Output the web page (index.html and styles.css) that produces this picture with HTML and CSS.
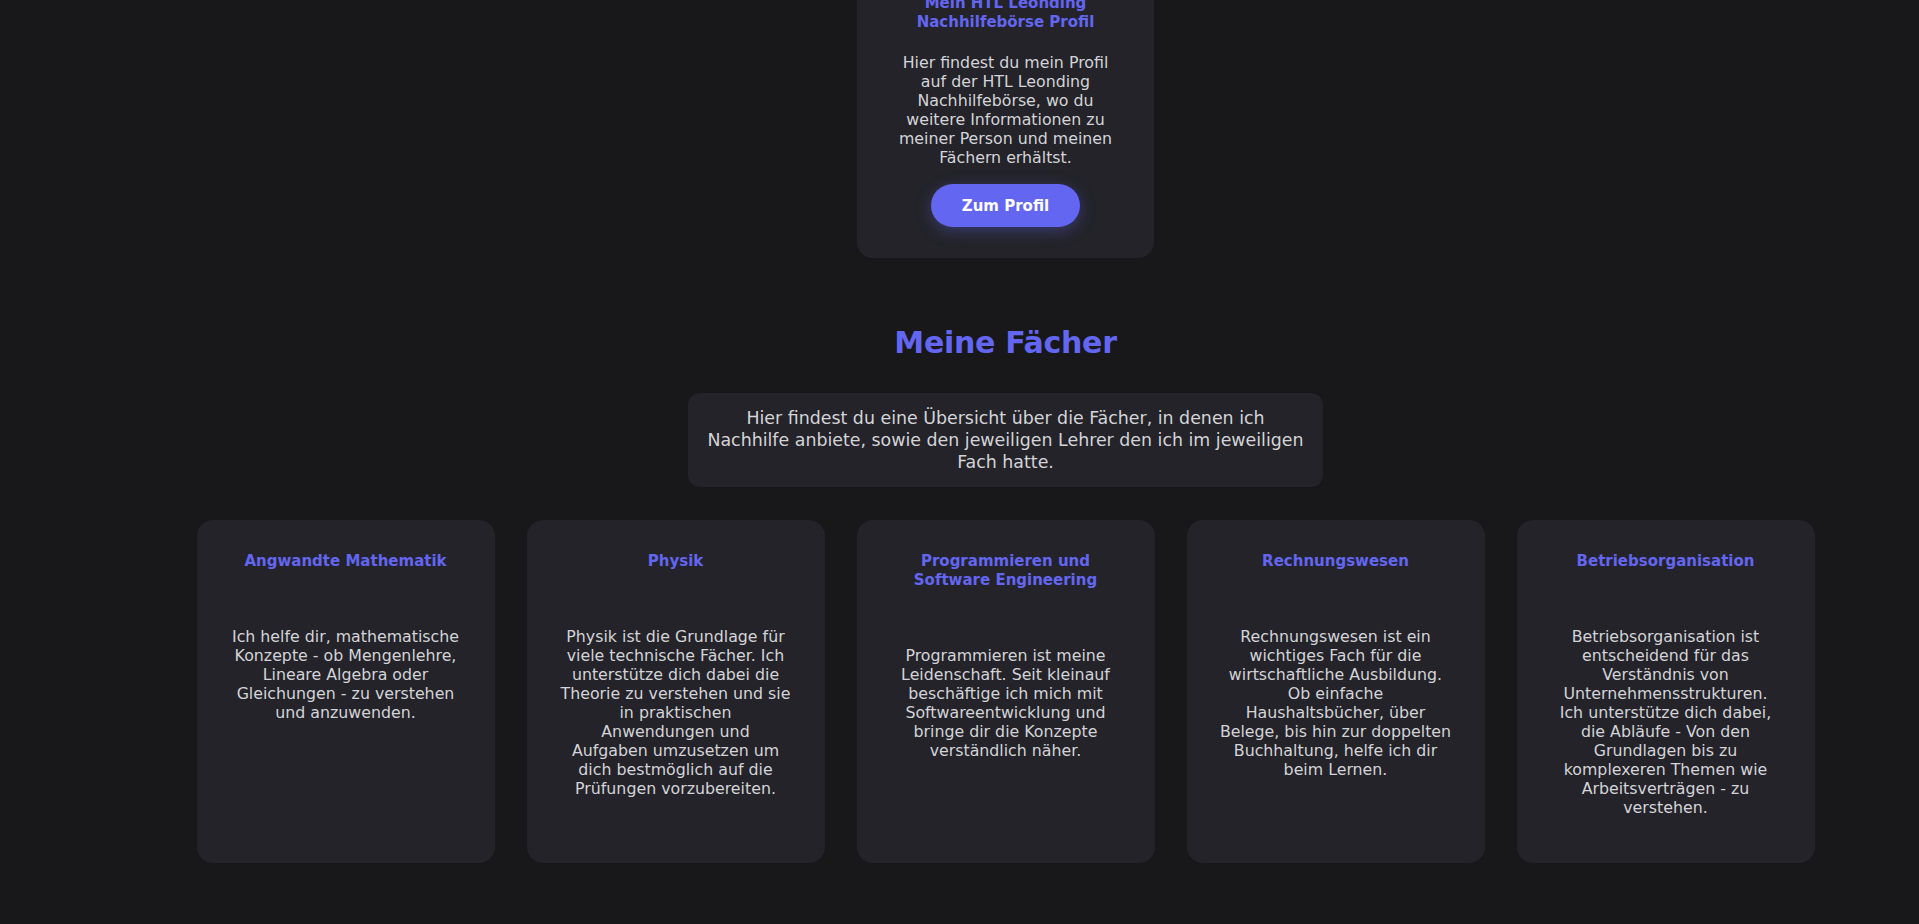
FILE: index.html
```html
<!DOCTYPE html>
<html lang="de">
<head>
<meta charset="utf-8">
<title>Meine Fächer</title>
<link rel="stylesheet" href="styles.css">
</head>
<body>
<main class="page">
  <section class="profile-card">
    <h3 class="card-title">Mein HTL Leonding Nachhilfebörse Profil</h3>
    <p class="card-text profile-text">Hier findest du mein Profil<br>auf der HTL Leonding<br>Nachhilfebörse, wo du<br>weitere Informationen zu<br>meiner Person und meinen<br>Fächern erhältst.</p>
    <a class="btn" href="#">Zum Profil</a>
  </section>

  <h2 class="section-title">Meine Fächer</h2>
  <p class="section-desc">Hier findest du eine Übersicht über die Fächer, in denen ich<br>Nachhilfe anbiete, sowie den jeweiligen Lehrer den ich im jeweiligen<br>Fach hatte.</p>

  <div class="subjects">
    <article class="subject">
      <h3 class="card-title">Angwandte Mathematik</h3>
      <div class="subject-icon"></div>
      <p class="card-text">Ich helfe dir, mathematische<br>Konzepte - ob Mengenlehre,<br>Lineare Algebra oder<br>Gleichungen - zu verstehen<br>und anzuwenden.</p>
    </article>
    <article class="subject">
      <h3 class="card-title">Physik</h3>
      <div class="subject-icon"></div>
      <p class="card-text">Physik ist die Grundlage für<br>viele technische Fächer. Ich<br>unterstütze dich dabei die<br>Theorie zu verstehen und sie<br>in praktischen<br>Anwendungen und<br>Aufgaben umzusetzen um<br>dich bestmöglich auf die<br>Prüfungen vorzubereiten.</p>
    </article>
    <article class="subject">
      <h3 class="card-title">Programmieren und Software Engineering</h3>
      <div class="subject-icon"></div>
      <p class="card-text">Programmieren ist meine<br>Leidenschaft. Seit kleinauf<br>beschäftige ich mich mit<br>Softwareentwicklung und<br>bringe dir die Konzepte<br>verständlich näher.</p>
    </article>
    <article class="subject">
      <h3 class="card-title">Rechnungswesen</h3>
      <div class="subject-icon"></div>
      <p class="card-text">Rechnungswesen ist ein<br>wichtiges Fach für die<br>wirtschaftliche Ausbildung.<br>Ob einfache<br>Haushaltsbücher, über<br>Belege, bis hin zur doppelten<br>Buchhaltung, helfe ich dir<br>beim Lernen.</p>
    </article>
    <article class="subject">
      <h3 class="card-title">Betriebsorganisation</h3>
      <div class="subject-icon"></div>
      <p class="card-text">Betriebsorganisation ist<br>entscheidend für das<br>Verständnis von<br>Unternehmensstrukturen.<br>Ich unterstütze dich dabei,<br>die Abläufe - Von den<br>Grundlagen bis zu<br>komplexeren Themen wie<br>Arbeitsverträgen - zu<br>verstehen.</p>
    </article>
  </div>
</main>
</body>
</html>
```

FILE: styles.css
```css
html, body {
  margin: 0;
  background: #18181b;
}

body {
  font-family: "DejaVu Sans", "Liberation Sans", sans-serif;
  color: #d4d4d8;
  overflow: hidden;
}

.page {
  display: flex;
  flex-direction: column;
  align-items: center;
  padding-left: 92px;
  margin-top: -38px;
  padding-bottom: 60px;
}

.profile-card {
  width: 297px;
  box-sizing: border-box;
  padding: 32px 32px 31px;
  background: #232329;
  border-radius: 16px;
  display: flex;
  flex-direction: column;
  align-items: center;
  text-align: center;
}

.card-title {
  margin: 0;
  font-size: 15px;
  line-height: 19px;
  font-weight: 700;
  color: #6366f1;
}

.card-text {
  margin: 0;
  font-size: 15.8px;
  line-height: 19px;
}

.profile-text {
  margin-top: 21px;
}

.btn {
  margin-top: 17px;
  height: 43px;
  padding: 0 31px;
  border-radius: 999px;
  background: #6366f1;
  color: #ffffff;
  font-size: 15px;
  font-weight: 700;
  display: flex;
  align-items: center;
  text-decoration: none;
  box-shadow: 0 4px 16px rgba(99, 102, 241, 0.35);
}

.section-title {
  margin: 67px 0 0;
  font-size: 30px;
  line-height: 36px;
  letter-spacing: -0.3px;
  font-weight: 700;
  color: #6366f1;
}

.section-desc {
  margin: 32px 0 0;
  width: 635px;
  box-sizing: border-box;
  padding: 14px 10px;
  background: #232329;
  border-radius: 12px;
  font-size: 17.4px;
  line-height: 22px;
  text-align: center;
}

.subjects {
  margin-top: 33px;
  display: grid;
  grid-template-columns: repeat(5, 298px);
  gap: 32px;
}

.subject {
  min-height: 343px;
  box-sizing: border-box;
  padding: 32px 29px;
  background: #232329;
  border-radius: 16px;
  text-align: center;
}

.subject-icon {
  height: 56px;
}
```
